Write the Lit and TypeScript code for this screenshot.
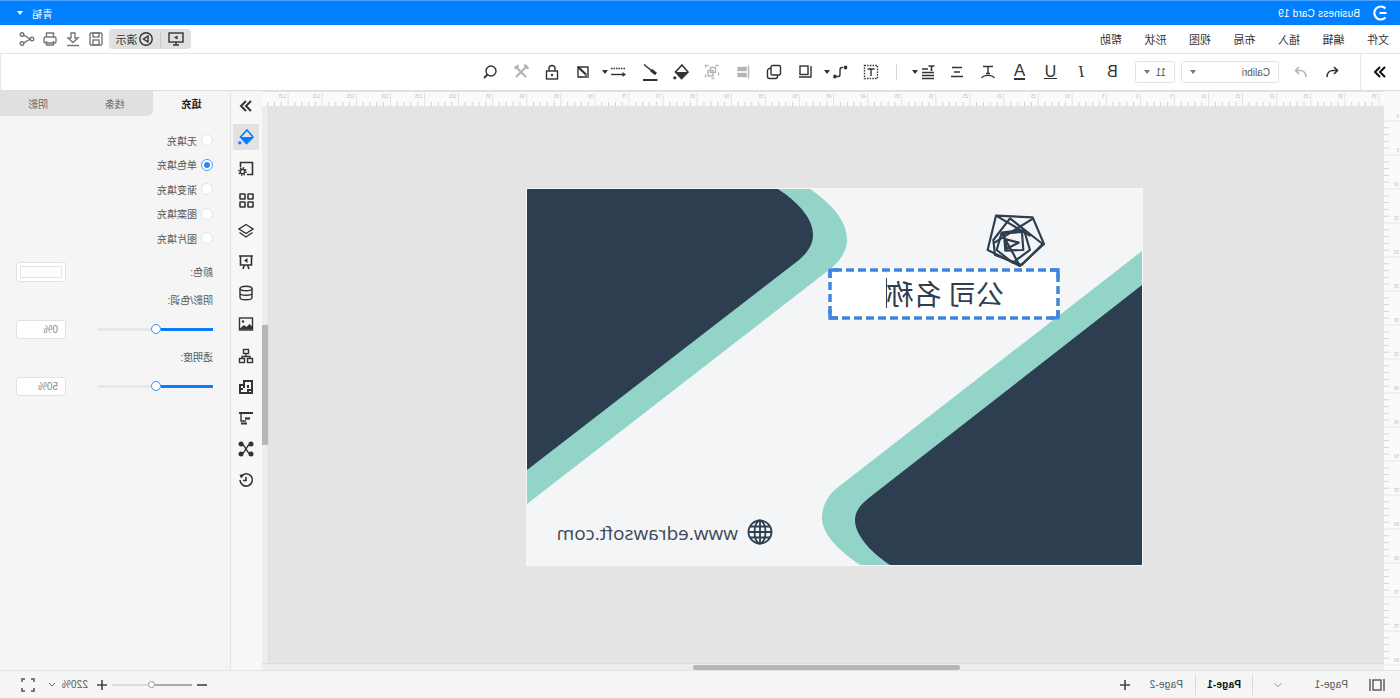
import { LitElement, html, svg, css } from 'lit';
import { customElement } from 'lit/decorators.js';

// every icon is drawn as it looks on screen, .icon undoes the page flip
const icon = (body: unknown, w = 16, h = 16) => html`<svg
  class="icon"
  width=${w}
  height=${h}
  viewBox="0 0 ${w} ${h}"
  fill="none"
  stroke="currentColor"
  stroke-width="1.4"
>${body}</svg>`;

const chevrons = svg`<path stroke-width="2" d="M8 3 3 8l5 5M13 3 8 8l5 5" />`;
const bucket = svg`
  <path stroke-width="1.6" d="M9 1 15 8l-6.500 6.500L2.500 8z" />
  <path fill="currentColor" stroke="none" d="M2.500 8H15l-6.500 6.500z" />
  <circle cx="1.800" cy="13.800" r="1.600" fill="currentColor" stroke="none" />`;

const railIcons = [
  svg`<path stroke-width="1.6" d="M2.500 7V2.500H14.500V14.500H9" /><circle cx="4.500" cy="11.500" r="2.200" /><circle cx="4.500" cy="11.500" r="3.600" stroke-width="1.600" stroke-dasharray="1.400 1.400" />`,
  svg`<rect x="2" y="2" width="5" height="5" rx=".5" stroke-width="1.600" /><rect x="10" y="2" width="5" height="5" rx=".5" stroke-width="1.600" /><rect x="2" y="10" width="5" height="5" rx=".5" stroke-width="1.600" /><rect x="10" y="10" width="5" height="5" rx=".5" stroke-width="1.600" />`,
  svg`<path d="M8 1.500 15 6l-7 4.500L1 6z" /><path d="m1.500 9.500 6.500 4.500 6.500-4.500" />`,
  svg`<path stroke-width="1.600" d="M1 2h14M2.500 2v9h11V2M5 15l1.500-4M11 15l-1.500-4" /><path fill="currentColor" stroke="none" d="M9.500 4v5L6 6.500z" />`,
  svg`<ellipse cx="8" cy="3.500" rx="6" ry="2.200" /><path d="M2 3.500v9c0 1.200 2.700 2.200 6 2.200s6-1 6-2.200v-9M2 8c0 1.200 2.700 2.200 6 2.200s6-1 6-2.200" />`,
  svg`<rect x="1.500" y="2" width="13" height="12" /><circle cx="5" cy="5.500" r="1.200" fill="currentColor" stroke="none" /><path fill="currentColor" stroke="none" d="M2 12.500 6 9l2.500 2 3-3 3 3v2.500H2z" />`,
  svg`<rect x="5.500" y="1.500" width="5" height="4" /><rect x="1.500" y="10.500" width="5" height="4" /><rect x="9.500" y="10.500" width="5" height="4" /><path d="M8 5.500v3M4 10.500v-2h8v2" />`,
  svg`<path stroke-width="2" d="M2 6h4V2h8v12H2zM6 6v3M2 10h3M10 6v3M10 14v-3h4" />`,
  svg`<path stroke-width="2" d="M1 3h14" /><path d="M3 3v8h5" /><path stroke-width="2" d="M3 13.500h6" /><path stroke-width="2.200" d="M7 8.500h5" />`,
  svg`<circle cx="3" cy="3" r="1.800" fill="currentColor" /><circle cx="13" cy="3" r="1.800" fill="currentColor" /><circle cx="3" cy="13" r="1.800" fill="currentColor" /><circle cx="13" cy="13" r="1.800" fill="currentColor" /><path d="M3 3c3 0 3.500 3 5 5s2 5 5 5M13 3c-3 0-3.500 3-5 5s-2 5-5 5" />`,
  svg`<path stroke-width="1.600" d="M3 4.500A6.200 6.200 0 1 1 2 8" /><path fill="currentColor" stroke="none" d="M1.500 2.500 6 3 3 6.500z" /><path stroke-width="1.600" d="M8 5v3.500H5" />`,
];

const ruler = () => {
  const items = [];
  for (let k = 0; k < 33; k++) {
    const x = 5 + k * 34.09;
    items.push(svg`<path d="M${x} 1V15" stroke="#e2e2e2" />`);
    items.push(svg`<text x=${x + 2} y="6" class="tick">${Math.abs(k - 7) * 5}</text>`);
    for (let m = 1; m < 5; m++) {
      items.push(svg`<path d="M${x + m * 6.82} 10V15" stroke="#cfcfcf" />`);
    }
  }
  return html`<svg class="hruler" width="1122" height="15">${items}</svg>`;
};

const sideRuler = () => {
  const items = [];
  for (let k = 0; k < 17; k++) {
    const y = 30 + k * 34;
    items.push(svg`<path d="M0 ${y}H16" stroke="#e6e6e6" />`);
    items.push(svg`<text x="1" y=${y - 3} class="tick">${k * 5}</text>`);
    for (let m = 1; m < 5; m++) {
      items.push(svg`<path d="M11 ${y + m * 6.8}H16" stroke="#d6d6d6" />`);
    }
  }
  return html`<svg class="vruler" width="16" height="579">${items}</svg>`;
};

@customElement('app-root')
export class AppRoot extends LitElement {
  static styles = css`
    :host {
      display: block;
      width: 1400px;
      height: 698px;
      overflow: hidden;
      font-family: 'Liberation Sans', 'Noto Sans CJK SC', sans-serif;
      color: #333;
    }

    /* the reference is a mirror image of the app */
    .page {
      display: flex;
      flex-direction: column;
      width: 1400px;
      height: 698px;
      transform: scaleX(-1);
      background: #fff;
    }

    .icon {
      display: block;
      flex: none;
      transform: scaleX(-1);
    }

    .titlebar {
      display: flex;
      align-items: center;
      height: 25px;
      box-sizing: border-box;
      border-top: 1px solid #4aa0ff;
      padding: 0 17px 0 12px;
      background: #0080ff;
      color: #fff;
      font-size: 10px;
      letter-spacing: 0.2px;
    }

    .titlebar .name {
      margin-left: 12px;
      flex: 1;
    }

    .titlebar .user {
      margin-right: 9px;
    }

    .caret {
      flex: none;
      width: 0;
      height: 0;
      border-left: 3px solid transparent;
      border-right: 3px solid transparent;
      border-top: 4px solid currentColor;
    }

    .menubar {
      display: flex;
      align-items: center;
      height: 29px;
      box-sizing: border-box;
      border-bottom: 1px solid #e4e4e4;
      padding: 0 19px 0 11px;
      font-size: 11px;
      gap: 22.5px;
    }

    .menubar .spacer {
      flex: 1;
    }

    .quick {
      display: flex;
      align-items: center;
      gap: 7px;
      color: #777;
    }

    .present {
      display: flex;
      align-items: center;
      width: 82px;
      height: 20px;
      margin-right: -17px;
      border-radius: 4px;
      background: #e0e0e0;
      color: #333;
    }

    .present .screen {
      padding: 0 7px;
      border-right: 1px solid #c9c9c9;
    }

    .present .show {
      display: flex;
      align-items: center;
      gap: 1px;
      padding: 0 6px;
      font-size: 11px;
    }

    .toolbar {
      display: flex;
      align-items: center;
      height: 37px;
      box-sizing: border-box;
      border-bottom: 1px solid #dedede;
      border-right: 1px solid #e6e6e6;
      color: #333;
    }

    .tb {
      display: flex;
      flex: none;
      align-items: center;
      justify-content: center;
      gap: 2px;
      width: 31px;
      height: 24px;
    }

    .tb.off {
      color: #b4b4b4;
    }

    .collapse {
      width: 39px;
      height: 36px;
      border-right: 1px solid #e6e6e6;
      color: #111;
    }

    .sep {
      flex: none;
      width: 1px;
      height: 16px;
      background: #d8d8d8;
    }

    .select {
      display: flex;
      flex: none;
      align-items: center;
      justify-content: space-between;
      height: 22px;
      box-sizing: border-box;
      padding: 0 8px;
      border: 1px solid #e2e2e2;
      border-radius: 3px;
      font-size: 10px;
      color: #555;
    }

    .select .caret {
      color: #777;
    }

    .letter {
      font-size: 16px;
      line-height: 16px;
    }

    .letter.under {
      border-bottom: 1.5px solid #333;
      line-height: 13px;
      padding: 0 1px;
    }

    .letter.thick {
      border-bottom: 2.5px solid #333;
      line-height: 14px;
      font-size: 17px;
    }

    .main {
      display: flex;
      flex: 1;
      min-height: 0;
    }

    .vruler,
    .hruler {
      display: block;
      flex: none;
      background: #fafafa;
    }

    .tick {
      font-size: 4.5px;
      fill: #c0c0c0;
    }

    .centre {
      display: flex;
      flex: none;
      flex-direction: column;
      width: 1122px;
    }

    .hruler {
      border-top: 1px solid #e2e2e2;
      box-sizing: border-box;
    }

    .work {
      display: flex;
      flex: 1;
      min-height: 0;
    }

    .canvas {
      flex: 1;
      box-sizing: border-box;
      padding: 83px 0 0 242px;
      background: #e4e4e4;
    }

    .vscroll {
      flex: none;
      width: 7px;
      box-sizing: border-box;
      border-left: 1px solid #dcdcdc;
      background: #ededed;
    }

    .vscroll div {
      width: 6px;
      height: 120px;
      margin-top: 219px;
      background: #b6b6b6;
    }

    .hscroll {
      flex: none;
      height: 7px;
      box-sizing: border-box;
      padding-top: 1px;
      border-top: 1px solid #dcdcdc;
      background: #ededed;
    }

    .hscroll div {
      width: 267px;
      height: 5px;
      margin-left: 424px;
      border-radius: 2px;
      background: #b6b6b6;
    }

    .card {
      position: relative;
      width: 615px;
      height: 376px;
      overflow: hidden;
      outline: 1px solid #f8f8f8;
      background: #f4f5f7;
      color: #2d3e50;
    }

    .art {
      display: block;
      transform: scaleX(-1);
    }

    .titlebox {
      position: absolute;
      left: 82px;
      top: 79px;
      display: flex;
      align-items: center;
      justify-content: center;
      width: 232px;
      height: 52px;
      background: #fff;
      font-family: 'Noto Sans CJK SC', sans-serif;
      font-size: 28px;
      line-height: 30px;
    }

    .titlebox svg {
      position: absolute;
      inset: 0;
    }

    .titlebox .text {
      position: relative;
      top: -1px;
      left: -1px;
    }

    .cursor {
      display: inline-block;
      width: 1px;
      height: 30px;
      margin-left: -1px;
      vertical-align: top;
      background: #2d3e50;
    }

    .url {
      position: absolute;
      left: 404px;
      top: 330px;
      font-family: 'Open Sans', sans-serif;
      font-size: 19px;
      line-height: 28px;
      color: #3c4855;
      white-space: nowrap;
    }

    .rail {
      display: flex;
      flex: none;
      flex-direction: column;
      align-items: center;
      width: 32px;
      box-sizing: border-box;
      padding-top: 2px;
      border-right: 1px solid #e4e4e4;
      background: #f7f7f7;
      color: #333;
    }

    .rail .slot {
      display: flex;
      flex: none;
      align-items: center;
      justify-content: center;
      width: 26px;
      height: 26px;
      margin-bottom: 5.2px;
    }

    .rail .active {
      background: #e2e2e2;
      color: #0a7bff;
    }

    .panel {
      flex: none;
      width: 230px;
      background: #f5f5f5;
      font-size: 10px;
      color: #555;
    }

    .tabs {
      display: flex;
      height: 25px;
      background: #f5f5f5;
    }

    .tab {
      display: flex;
      flex: none;
      align-items: center;
      justify-content: center;
      width: 77px;
      background: #e0e0e0;
      color: #666;
    }

    .tab.on {
      background: #f5f5f5;
      color: #222;
      font-weight: 700;
    }

    .tab.next {
      border-bottom-left-radius: 6px;
    }

    .fills {
      padding: 12px 0 0 17px;
    }

    .fill {
      display: flex;
      align-items: center;
      gap: 4px;
      height: 24.5px;
    }

    .radio {
      display: flex;
      flex: none;
      align-items: center;
      justify-content: center;
      width: 12px;
      height: 12px;
      box-sizing: border-box;
      border: 1px solid #e4e4e4;
      border-radius: 50%;
      background: #fff;
    }

    .radio.on {
      border-color: #4a9bff;
    }

    .radio.on::after {
      content: '';
      width: 6px;
      height: 6px;
      border-radius: 50%;
      background: #2f86f5;
    }

    .row {
      display: flex;
      align-items: center;
      justify-content: space-between;
      padding: 0 16px 0 17px;
    }

    .label {
      height: 14px;
      margin: 12px 0 12px 17px;
      line-height: 14px;
    }

    .label.first {
      margin-bottom: 12px;
    }

    .swatch {
      width: 50px;
      height: 20px;
      box-sizing: border-box;
      margin-top: 11px;
      padding: 3px;
      border: 1px solid #e2e2e2;
      border-radius: 3px;
      background: #fff;
    }

    .swatch div {
      height: 100%;
      box-sizing: border-box;
      border: 1px solid #e4e4e4;
    }

    .field {
      display: flex;
      align-items: center;
      width: 50px;
      height: 19px;
      box-sizing: border-box;
      padding-left: 7px;
      border: 1px solid #e2e2e2;
      border-radius: 3px;
      background: #fff;
      color: #888;
    }

    .slider {
      display: flex;
      align-items: center;
      width: 115px;
    }

    .slider .done {
      width: 52px;
      height: 3px;
      background: #0a7bff;
    }

    .slider .rest {
      flex: 1;
      height: 3px;
      background: #e6e8ec;
    }

    .slider .knob {
      flex: none;
      width: 10px;
      height: 10px;
      box-sizing: border-box;
      border: 1.5px solid #3b92f8;
      border-radius: 50%;
      background: #fff;
    }

    .footer {
      display: flex;
      flex: none;
      align-items: center;
      height: 28px;
      box-sizing: border-box;
      padding: 0 20px 0 15px;
      border-top: 1px solid #e4e4e4;
      background: #f5f5f5;
      font-size: 10px;
      letter-spacing: 0.2px;
      color: #555;
      white-space: nowrap;
    }

    .footer .page-name {
      width: 30px;
    }

    .footer .bold {
      width: 31px;
      color: #111;
      font-weight: 700;
    }

    .footer .sep {
      height: 20px;
    }

    .footer .plus {
      color: #444;
    }

    .zoom {
      display: flex;
      flex: none;
      align-items: center;
      width: 80px;
      margin: 0 2px;
    }

    .zoom .done {
      flex: 1;
      height: 2px;
      background: #aaa;
    }

    .zoom .rest {
      flex: 1;
      height: 2px;
      background: #dcdcdc;
    }

    .zoom .knob {
      flex: none;
      width: 7px;
      height: 7px;
      box-sizing: border-box;
      border: 1px solid #999;
      border-radius: 50%;
      background: #fff;
    }
  `;

  private _toolbar() {
    return html`
      <div class="toolbar">
        <div class="tb collapse">${icon(chevrons)}</div>
        <div class="tb" style="margin-left:12px">
          ${icon(svg`<path stroke-width="1.6" d="M3 13C3 8.500 6 6.500 9 6.500H13.500" /><path stroke-width="1.6" d="M10 3l3.500 3.500L10 10" />`)}
        </div>
        <div class="tb off">
          ${icon(svg`<path stroke-width="1.6" d="M13 13C13 8.500 10 6.500 7 6.500H2.500" /><path stroke-width="1.6" d="M6 3 2.500 6.500 6 10" />`)}
        </div>
        <div class="select" style="width:98px;margin-left:7px">
          <span>Calibri</span><span class="caret"></span>
        </div>
        <div class="select" style="width:40px;margin-left:6px">
          <span>11</span><span class="caret"></span>
        </div>
        <div class="tb" style="margin-left:7px"><span class="letter">B</span></div>
        <div class="tb"><span class="letter" style="font-family:'Liberation Serif';font-style:italic">I</span></div>
        <div class="tb"><span class="letter under">U</span></div>
        <div class="tb"><span class="letter thick">A</span></div>
        <div class="tb">
          ${icon(svg`<path d="M3 2.500h10M8 2.500v7M6 9.500h4M1.500 14C4 10.500 12 10.500 14.500 14" />`)}
        </div>
        <div class="tb">${icon(svg`<path d="M3 3.500h10M5 8h6M2 12.500h12" />`)}</div>
        <div class="tb" style="margin-left:2px">
          ${icon(svg`<path d="M2 5h6M2 8.500h12M2 11.500h12M2 14.500h12" /><path stroke-width="1.600" d="M8.500 2h6M11.500 2v5" />`)}
          <span class="caret"></span>
        </div>
        <div class="sep" style="margin-left:12px"></div>
        <div class="tb" style="margin-left:9px">
          ${icon(svg`<rect x="1.500" y="1.500" width="13" height="13" stroke-dasharray="1.500 1.200" /><path d="M4.500 5h7M8 5v7" />`)}
        </div>
        <div class="tb" style="margin-left:4px">
          ${icon(svg`<circle cx="3" cy="12.500" r="1.200" fill="currentColor" /><circle cx="13.500" cy="3.500" r="1.200" fill="currentColor" /><path d="M5 12.500h1.500c1.500 0 1.500-1 1.500-2.500V6c0-1.500 0-2.500 2-2.500h1" />`)}
          <span class="caret"></span>
        </div>
        <div class="tb">
          ${icon(svg`<rect x="3" y="2" width="8" height="8.500" /><path d="M14 2v11H2" />`)}
        </div>
        <div class="tb">
          ${icon(svg`<rect x="5" y="1.500" width="9.500" height="9.500" rx="1.500" /><path d="M5 4.500H3.500C2.500 4.500 1.500 5.500 1.500 6.500v6c0 1 1 2 2 2h6c1 0 2-1 2-2V11" />`)}
        </div>
        <div class="tb off">
          ${icon(svg`<path d="M13.500 1.500v13" /><rect x="3" y="3.500" width="8" height="3" fill="currentColor" /><rect x="3" y="9.500" width="8" height="3" fill="currentColor" />`)}
        </div>
        <div class="tb off">
          ${icon(svg`<rect x="1.500" y="1.500" width="13" height="13" stroke-dasharray="3 7" /><rect x="6.500" y="3.500" width="5" height="5" /><rect x="4" y="6.500" width="5" height="5.500" />`)}
        </div>
        <div class="tb">${icon(bucket)}</div>
        <div class="tb">
          ${icon(svg`<path stroke-width="1.600" d="M2 2.500 10 9" /><path stroke-width="3" d="M9 8l5 4" /><path stroke-width="2" d="M1 18h14.500" />`, 16, 20)}
        </div>
        <div class="tb" style="width:37px;margin-left:2px">
          ${icon(svg`<path stroke-dasharray="1.500 1" d="M1 3.500h14" /><path d="M1 9.500h13.500" /><path fill="currentColor" stroke="none" d="M12.500 7 16 9.500 12.500 12z" />`, 16, 14)}
          <span class="caret"></span>
        </div>
        <div class="tb" style="margin-left:-3px">
          ${icon(svg`<path d="M3 5V3h10v10H5" /><path stroke-width="2.200" d="M3 3 11 10.500" /><circle cx="11.500" cy="11.500" r="1.800" fill="#777" stroke="none" /><path d="M3 5v8h3" />`)}
        </div>
        <div class="tb">
          ${icon(svg`<rect x="2.500" y="7" width="11" height="8" /><path d="M5 7V4.500a3 3 0 0 1 6 0V7" /><circle cx="8" cy="11" r="1.200" fill="currentColor" stroke="none" />`)}
        </div>
        <div class="tb off">
          ${icon(svg`<path stroke-width="2.200" d="M3 3l10 10M13 3 3 13" /><path stroke-width="2.600" d="M1.500 4.500l4-3M11 1.500c2 0 3.500 1.500 3.500 3.500" />`)}
        </div>
        <div class="tb">
          ${icon(svg`<circle cx="9" cy="7" r="5" /><path stroke-width="1.800" d="M5.500 10.500 2 14" />`)}
        </div>
      </div>
    `;
  }

  private _card() {
    return html`
      <div class="card">
        <svg class="art" width="615" height="376">
          <path fill="#92d4c7" d="M0 0H283C305 15 320 32 320 51C320 63 312 74 298 84L0 315Z" />
          <path fill="#2d3e50" d="M0 0H251C272 14 286 30 286 46C286 56 280 64 272 71L0 281Z" />
          <path fill="#92d4c7" d="M615 62L310 299C300 307 295 318 295 329C295 345 312 362 333 376H615Z" />
          <path fill="#2d3e50" d="M615 96L343 308C334 315 328 322 328 331C328 347 345 364 363 376H615Z" />
          <g transform="translate(293 11) scale(.3333)" fill="none" stroke="#2d3e50" stroke-width="6.500" stroke-linejoin="round">
            <path d="M528 47 638 52 672 132 600 198 503 150Z" />
            <path d="M570 55 668 132 605 195 525 165 520 120Z" />
            <path d="M528 47 632 108M520 130 640 55M600 198 545 98" />
            <path d="M545 98 612 90 630 150 578 188 530 150Z" />
            <path d="M552 100 606 96 610 150 556 152Z" />
            <path d="M558 118 596 128 560 146Z" />
          </g>
          <g transform="translate(233 343)" fill="none" stroke="#2d3e50" stroke-width="1.800">
            <circle r="11.500" />
            <ellipse rx="5.500" ry="11.500" />
            <path d="M0-11.500V11.500M-11.500 0H11.500M-10-5.500H10M-10 5.500H10" />
          </g>
        </svg>
        <div class="titlebox">
          <svg width="232" height="52" fill="none" stroke="#4086dc" stroke-width="3.500">
            <rect x="2" y="2" width="228" height="48" stroke-dasharray="8 4" />
            <path d="M2 10V2H10M222 2H230V10M230 42V50H222M10 50H2V42" />
          </svg>
          <span class="text">公司 名称<span class="cursor"></span></span>
        </div>
        <div class="url">www.edrawsoft.com</div>
      </div>
    `;
  }

  private _panel() {
    const fills = ['无填充', '单色填充', '渐变填充', '图案填充', '图片填充'];
    return html`
      <div class="panel">
        <div class="tabs">
          <div class="tab on">填充</div>
          <div class="tab next">线条</div>
          <div class="tab" style="flex:1">阴影</div>
        </div>
        <div class="fills">
          ${fills.map(
            (name, i) => html`
              <div class="fill">
                <span class="radio ${i === 1 ? 'on' : ''}"></span>
                <span>${name}</span>
              </div>
            `
          )}
        </div>
        <div class="row">
          <span style="margin-top:11px">颜色:</span>
          <div class="swatch"><div></div></div>
        </div>
        <div class="label">阴影/色调:</div>
        <div class="row">
          <div class="slider"><div class="done"></div><div class="knob"></div><div class="rest"></div></div>
          <div class="field">0%</div>
        </div>
        <div class="label first">透明度:</div>
        <div class="row">
          <div class="slider"><div class="done"></div><div class="knob"></div><div class="rest"></div></div>
          <div class="field">50%</div>
        </div>
      </div>
    `;
  }

  private _footer() {
    return html`
      <div class="footer">
        ${icon(svg`<path d="M1 2v12M15 2v12" /><rect x="4" y="3" width="8" height="10" />`)}
        <span class="page-name" style="margin-left:21px">Page-1</span>
        <span style="margin-left:32px;color:#999">${icon(svg`<path stroke-width="1" d="M4.500 6.500 8 9.500l3.500-3" />`)}</span>
        <span class="sep" style="margin-left:17px"></span>
        <span class="page-name bold" style="margin-left:11px">Page-1</span>
        <span class="sep" style="margin-left:14px"></span>
        <span class="page-name" style="margin-left:12px">Page-2</span>
        <span class="plus" style="margin-left:20px">${icon(svg`<path stroke-width="1.600" d="M3 8h10M8 3v10" />`)}</span>
        <span style="flex:1"></span>
        <span class="plus">${icon(svg`<path stroke-width="1.600" d="M3 8h10" />`, 16, 16)}</span>
        <div class="zoom">
          <div class="done"></div>
          <div class="knob"></div>
          <div class="rest"></div>
        </div>
        <span class="plus">${icon(svg`<path stroke-width="1.600" d="M3 8h10M8 3v10" />`)}</span>
        <span style="margin-left:6px;width:26px">220%</span>
        <span style="margin-left:2px;color:#666">${icon(svg`<path stroke-width="1" d="M5 6l3 3 3-3" />`)}</span>
        <span style="margin-left:8px">
          ${icon(svg`<path stroke-width="1.500" d="M2 5V2h3M11 2h3v3M14 11v3h-3M5 14H2v-3" />`)}
        </span>
      </div>
    `;
  }

  render() {
    const menu = ['文件', '编辑', '插入', '布局', '视图', '形状', '帮助'];
    return html`
      <div class="page">
        <div class="titlebar">
          ${icon(svg`<path stroke-width="2.200" d="M13.500 3.500a6.500 6.500 0 1 0 0 9M7.500 8h7" />`)}
          <span class="name">Business Card 19</span>
          <span class="user">青韬</span>
          <span class="caret"></span>
        </div>
        <div class="menubar">
          ${menu.map(item => html`<span>${item}</span>`)}
          <span class="spacer"></span>
          <div class="present">
            <span class="screen">
              ${icon(svg`<rect x="1" y="2" width="14" height="9" /><path d="M5 14h6M8 11v3" /><path fill="currentColor" stroke="none" d="M9.500 4.500v4L6 6.500z" />`)}
            </span>
            <span class="show">
              ${icon(svg`<circle cx="8" cy="8" r="6.200" /><path d="M10 5v6L5.500 8z" />`)}演示
            </span>
          </div>
          <div class="quick">
            ${icon(svg`<rect x="2" y="2" width="12" height="12" rx="1" /><rect x="5" y="2" width="6" height="4" /><rect x="5" y="9" width="6" height="5" />`)}
            ${icon(svg`<path d="M6 2h4v5h3L8 11.500 3 7h3zM2 14.500h12" />`)}
            ${icon(svg`<rect x="2" y="6" width="12" height="6" rx="1.500" /><path d="M4.500 6V2h7v4M4.500 10v4h7v-4" />`)}
            ${icon(svg`<circle cx="3" cy="3.500" r="1.800" /><circle cx="3" cy="12.500" r="1.800" /><circle cx="13" cy="8" r="1.800" /><path d="M4.800 4.200 11.200 8 4.800 11.800" />`)}
          </div>
        </div>
        ${this._toolbar()}
        <div class="main">
          ${sideRuler()}
          <div class="centre">
            ${ruler()}
            <div class="work">
              <div class="canvas">${this._card()}</div>
              <div class="vscroll"><div></div></div>
            </div>
            <div class="hscroll"><div></div></div>
          </div>
          <div class="rail">
            <div class="slot">${icon(chevrons)}</div>
            <div class="slot active">${icon(bucket)}</div>
            ${railIcons.map(body => html`<div class="slot">${icon(body)}</div>`)}
          </div>
          ${this._panel()}
        </div>
        ${this._footer()}
      </div>
    `;
  }
}

declare global {
  interface HTMLElementTagNameMap {
    'app-root': AppRoot;
  }
}
